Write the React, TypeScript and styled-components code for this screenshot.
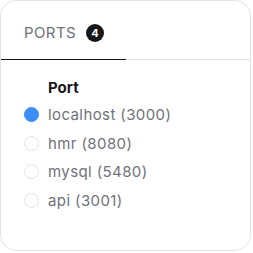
import React, { useState } from 'react';
import styled, { createGlobalStyle } from 'styled-components';

const Global = createGlobalStyle`
  html, body {
    margin: 0;
    padding: 0;
    background: #ffffff;
  }
  body {
    font-family: Inter, "Noto Sans", sans-serif;
  }
`;

const Card = styled.div`
  box-sizing: border-box;
  width: 251px;
  height: 251px;
  border: 1px solid #e4e4e7;
  border-radius: 16px;
  background: #fff;
  overflow: hidden;
`;

const TabList = styled.div`
  display: flex;
  height: 58px;
  border-bottom: 1px solid #e4e4e7;
`;

const Tab = styled.button<{ $active?: boolean }>`
  display: flex;
  align-items: center;
  gap: 10px;
  box-sizing: border-box;
  width: 125px;
  height: 59px;
  margin-bottom: -1px;
  padding: 4px 0 0 23px;
  border: none;
  border-bottom: 1px solid ${(p) => (p.$active ? '#18181b' : 'transparent')};
  background: none;
  font-family: inherit;
  font-size: 15px;
  letter-spacing: 0.4px;
  color: #71717a;
  cursor: pointer;
`;

const Badge = styled.span`
  display: inline-flex;
  align-items: center;
  justify-content: center;
  width: 18px;
  height: 18px;
  margin-top: 1px;
  border-radius: 50%;
  background: #18181b;
  color: #fff;
  font-size: 11px;
  font-weight: 700;
  letter-spacing: 0;
`;

const Panel = styled.div`
  padding: 19px 0 0 23px;
`;

const Heading = styled.div`
  padding-left: 24px;
  font-size: 15px;
  font-weight: 700;
  color: #18181b;
  line-height: 18px;
  margin-bottom: 3px;
`;

const List = styled.div`
  display: flex;
  flex-direction: column;
`;

const Row = styled.label`
  display: flex;
  align-items: center;
  gap: 9px;
  height: 28.7px;
  font-size: 15px;
  letter-spacing: 0.4px;
  color: #71717a;
  cursor: pointer;
`;

const Dot = styled.span<{ $checked?: boolean }>`
  box-sizing: border-box;
  width: 15px;
  height: 15px;
  border-radius: 50%;
  border: 1px solid ${(p) => (p.$checked ? '#3b8ef6' : '#e4e4e7')};
  background: ${(p) => (p.$checked ? '#3b8ef6' : '#fff')};
`;

const ports = ['localhost (3000)', 'hmr (8080)', 'mysql (5480)', 'api (3001)'];

export default function App() {
  const [selected, setSelected] = useState(0);
  return (
    <>
      <Global />
      <Card>
        <TabList>
          <Tab $active>
            PORTS <Badge>4</Badge>
          </Tab>
        </TabList>
        <Panel>
          <Heading>Port</Heading>
          <List>
            {ports.map((p, i) => (
              <Row key={p} onClick={() => setSelected(i)}>
                <Dot $checked={selected === i} />
                {p}
              </Row>
            ))}
          </List>
        </Panel>
      </Card>
    </>
  );
}
